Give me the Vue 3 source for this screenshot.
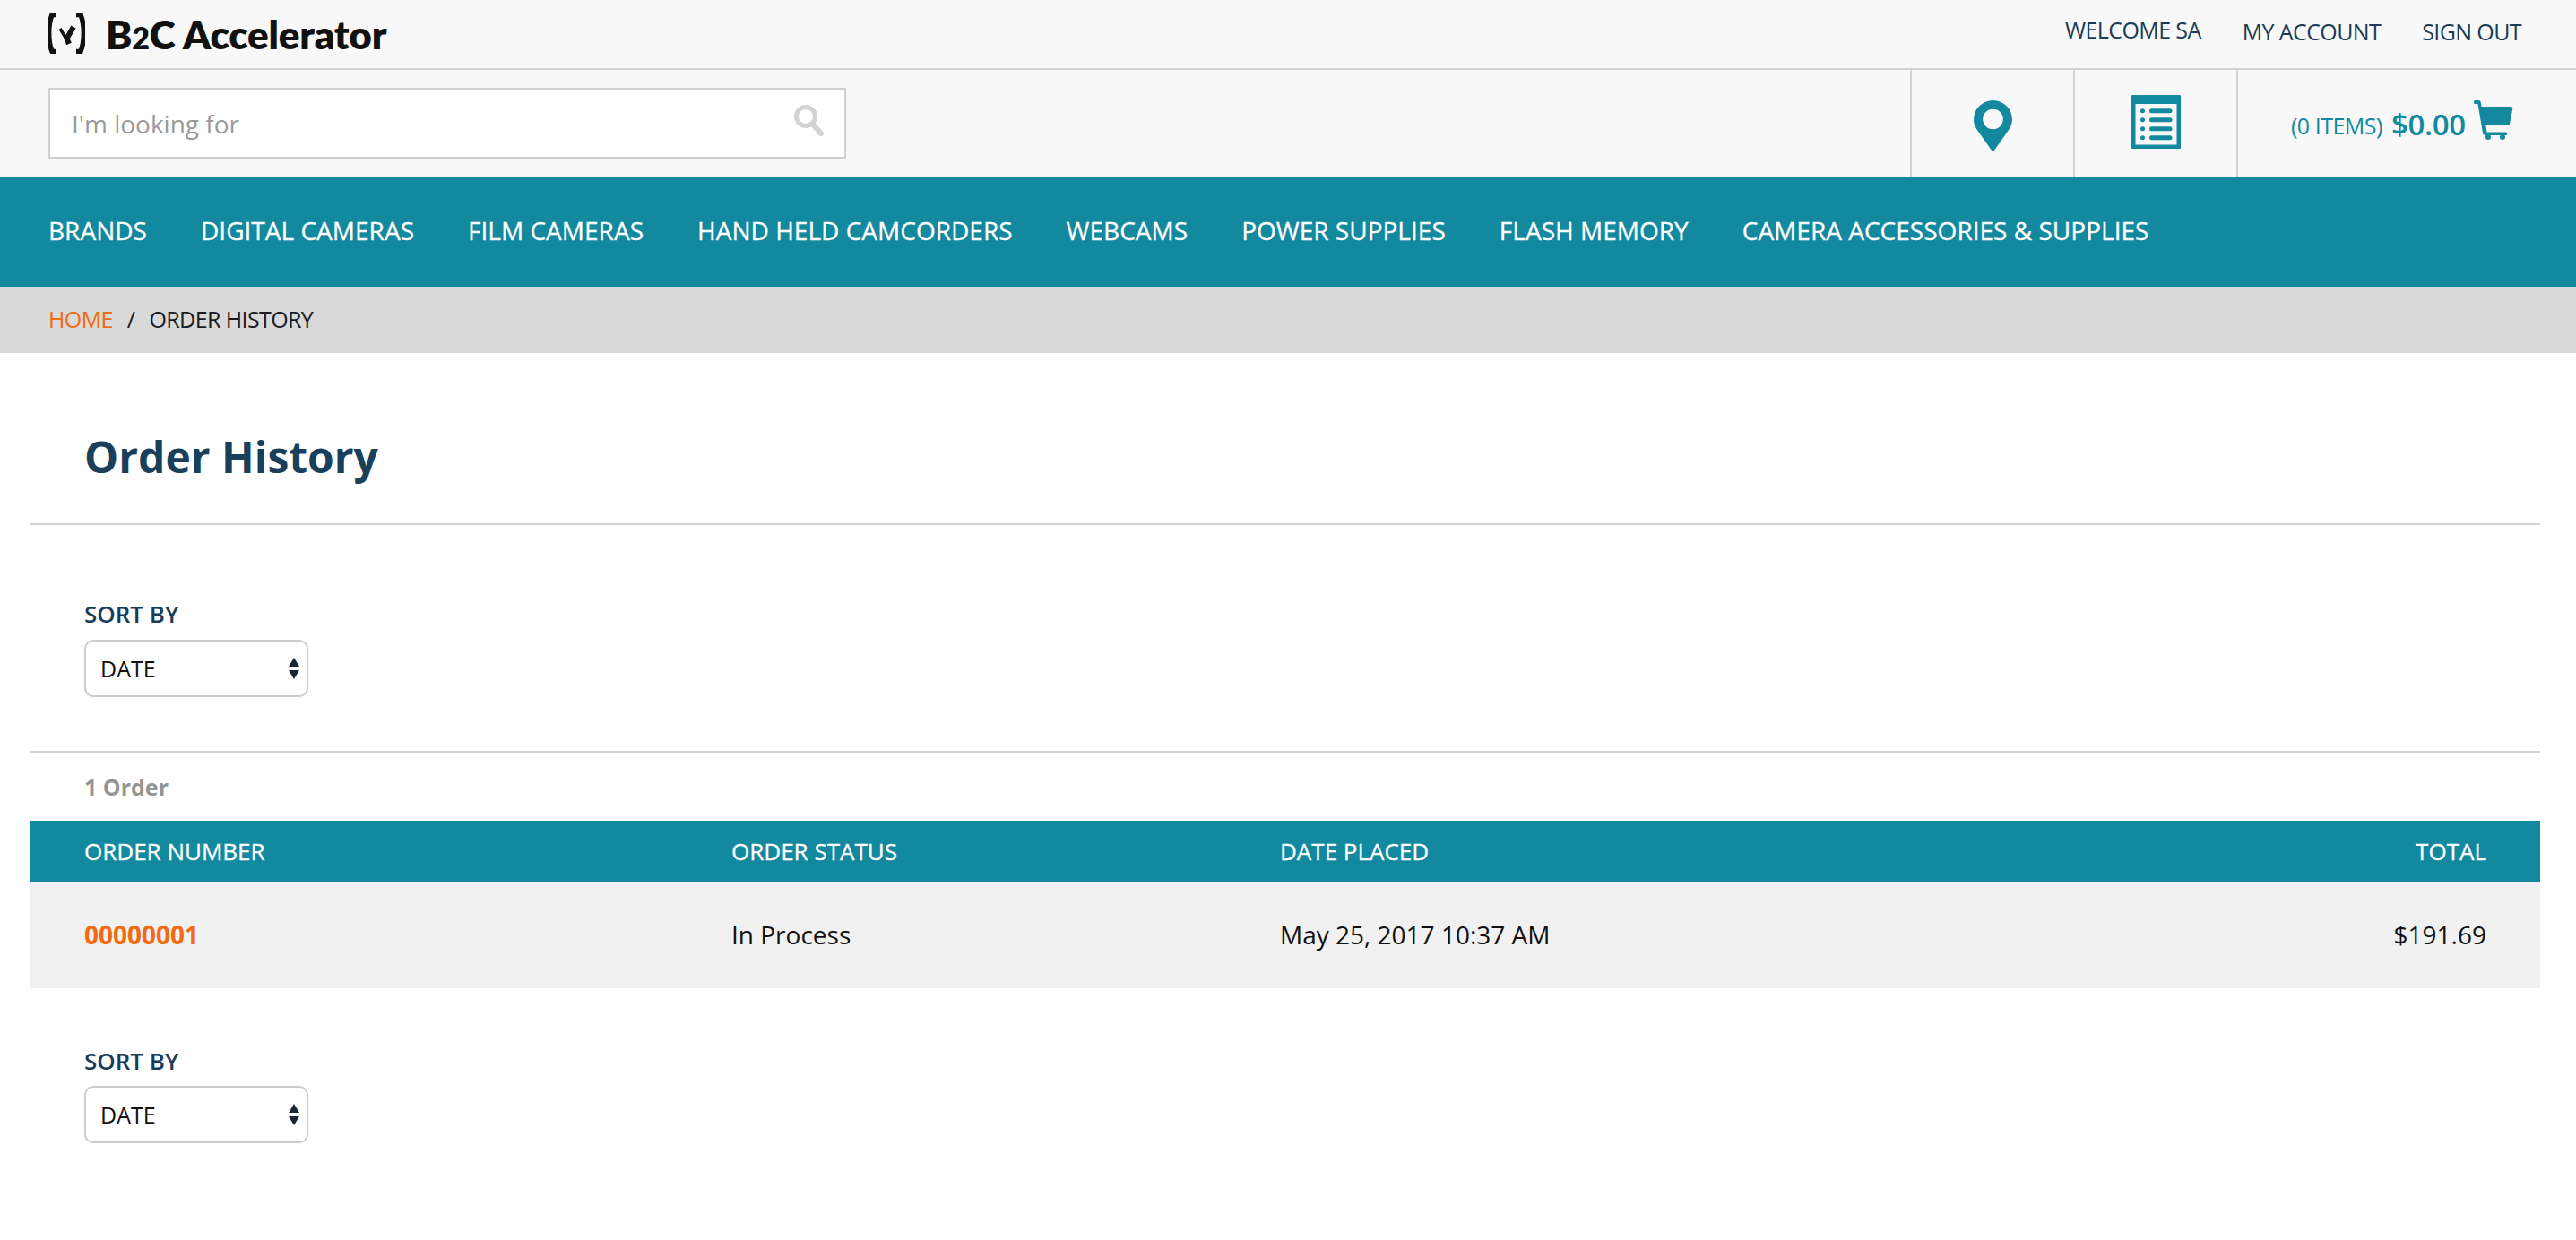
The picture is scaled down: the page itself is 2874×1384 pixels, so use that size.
<script setup>
const nav = ['BRANDS','DIGITAL CAMERAS','FILM CAMERAS','HAND HELD CAMCORDERS','WEBCAMS','POWER SUPPLIES','FLASH MEMORY','CAMERA ACCESSORIES & SUPPLIES']
</script>

<template>
  <div class="page">
    <header class="top">
      <div class="brand">
        <svg class="logo" width="42" height="46" viewBox="0 0 42 46">
          <path d="M10 2.500H5C0.500 14 0.500 32 5 43.500H10M32 2.500h5C41.500 14 41.500 32 37 43.500H32" fill="none" stroke="#111" stroke-width="5.500"/>
          <path d="M14 18l8 13" fill="none" stroke="#111" stroke-width="3.500"/>
          <path d="M29 16l-7.500 13 2.500 6" fill="none" stroke="#111" stroke-width="6"/>
        </svg>
        <span class="brand-name">B<span class="two">2</span>C Accelerator</span>
      </div>
      <nav class="account">
        <a class="welcome">WELCOME SA</a>
        <a>MY ACCOUNT</a>
        <a>SIGN OUT</a>
      </nav>
    </header>

    <div class="tools">
      <div class="search">
        <span class="placeholder">I'm looking for</span>
        <svg width="36" height="36" viewBox="0 0 36 36"><circle cx="15" cy="14" r="10.500" fill="none" stroke="#d2d3d5" stroke-width="5"/><path d="M22 22l10 11" stroke="#d2d3d5" stroke-width="6" stroke-linecap="round"/></svg>
      </div>
      <div class="icons">
        <div class="cell">
          <svg class="pin" width="43" height="58" viewBox="0 0 43 58"><path fill-rule="evenodd" fill="#12899e" d="M21.500 0A21.500 21.500 0 0 1 43 21.500C43 27 40.500 31 37 36L21.500 58 6 36C2.500 31 0 27 0 21.500A21.500 21.500 0 0 1 21.500 0zm0 9.700a11.300 11.300 0 1 0 0 22.600 11.300 11.300 0 0 0 0-22.600z"/></svg>
        </div>
        <div class="cell">
          <svg class="list" width="55" height="60" viewBox="0 0 55 60"><path fill-rule="evenodd" fill="#12899e" d="M1 0h53a1 1 0 0 1 1 1v58a1 1 0 0 1-1 1H1a1 1 0 0 1-1-1V1a1 1 0 0 1 1-1zm3.500 10v45.500h46V10z"/><g fill="#12899e"><circle cx="12.500" cy="17.700" r="2.500"/><rect x="20" y="15.200" width="25.500" height="5" rx="2.500"/><circle cx="12.500" cy="27.700" r="2.500"/><rect x="20" y="25.200" width="25.500" height="5" rx="2.500"/><circle cx="12.500" cy="37.700" r="2.500"/><rect x="20" y="35.200" width="25.500" height="5" rx="2.500"/><circle cx="12.500" cy="47.700" r="2.500"/><rect x="20" y="45.200" width="25.500" height="5" rx="2.500"/></g></svg>
        </div>
        <div class="cart">
          <span class="items">(0 ITEMS)</span>
          <span class="amount">$0.00</span>
          <svg class="cart-icon" width="44" height="44" viewBox="0 0 44 44"><path fill="#12899e" d="M1 0h4.500C7 0 7.500 1 7.800 2.500L8.500 7H41c2 0 2.500 1 2.200 3L40 26c-.3 1.500-1 2-2 2H13.500l1 7.500H36c1.500 0 1.500 3.500 0 3.500H12.500c-1.500 0-2.200-1-2.500-2.500L4.500 4H1C-.3 4-.3 0 1 0z"/><circle fill="#12899e" cx="16" cy="41" r="3"/><circle fill="#12899e" cx="32" cy="41" r="3"/></svg>
        </div>
      </div>
    </div>

    <nav class="main-nav">
      <a v-for="n in nav" :key="n">{{ n }}</a>
    </nav>

    <div class="crumbs">
      <a>HOME</a><span class="sep">/</span><span>ORDER HISTORY</span>
    </div>

    <main class="content">
      <h1>Order History</h1>
      <div class="sort first">
        <label>SORT BY</label>
        <div class="select-wrap">
          <select><option>DATE</option></select>
          <svg width="12" height="24" viewBox="0 0 12 24"><path fill="#1b2530" d="M6 0l6 10H0zM0 14h12L6 24z"/></svg>
        </div>
      </div>
      <div class="count">1 Order</div>
      <div class="table">
        <div class="row head">
          <span>ORDER NUMBER</span><span>ORDER STATUS</span><span>DATE PLACED</span><span>TOTAL</span>
        </div>
        <div class="row body">
          <a>00000001</a><span>In Process</span><span>May 25, 2017 10:37 AM</span><span>$191.69</span>
        </div>
      </div>
      <div class="sort last">
        <label>SORT BY</label>
        <div class="select-wrap">
          <select><option>DATE</option></select>
          <svg width="12" height="24" viewBox="0 0 12 24"><path fill="#1b2530" d="M6 0l6 10H0zM0 14h12L6 24z"/></svg>
        </div>
      </div>
    </main>
  </div>
</template>

<style>
html, body { margin: 0; background: #fff; }
</style>

<style scoped>
.page { width: 2874px; height: 1384px; overflow: hidden; font-family: "Open Sans", "Noto Sans", sans-serif; font-size: 26px; color: #111; }
.top { height: 76px; background: #f8f8f8; border-bottom: 2px solid #d2d2d2; display: flex; justify-content: space-between; align-items: center; padding: 0 61px 0 53px; }
.brand { display: flex; align-items: center; gap: 23px; }
.logo { display: block; margin-top: -2px; }
.brand-name { font-family: Lato, "Open Sans", sans-serif; font-size: 44px; font-weight: 800; letter-spacing: -0.2px; color: #111; line-height: 1; }
.two { font-size: 34px; }
.account { display: flex; gap: 46px; font-size: 25px; letter-spacing: -0.6px; color: #1a3c57; margin-top: -7px; }
.welcome { position: relative; top: -2px; }
.tools { height: 120px; background: #f8f8f8; display: flex; justify-content: space-between; padding-left: 54px; }
.search { width: 890px; height: 79px; box-sizing: border-box; margin-top: 20px; background: #fff; border: 2px solid #cfcfcf; display: flex; align-items: center; justify-content: space-between; padding: 0 22px 0 24px; }
.search svg { margin-top: -8px; }
.placeholder { font-size: 28px; color: #9a9a9a; }
.icons { display: flex; height: 120px; }
.cell { width: 180px; border-left: 2px solid #d2d2d2; display: flex; align-items: center; justify-content: center; }
.pin { margin-top: 5px; }
.list { margin-top: -4px; }
.cart { width: 379px; box-sizing: border-box; border-left: 2px solid #d2d2d2; display: flex; align-items: center; padding-left: 59px; color: #12899e; }
.items { font-size: 25px; letter-spacing: -0.5px; margin-top: 4px; }
.amount { font-size: 33px; font-weight: 600; margin-left: 10px; letter-spacing: -0.3px; }
.cart-icon { margin: -8px 0 0 9px; }
.main-nav { height: 122px; box-sizing: border-box; padding-bottom: 5px; background: #12899e; display: flex; align-items: center; gap: 60px; padding-left: 54px; }
.main-nav a { color: #fff; font-size: 28px; font-weight: 500; letter-spacing: 0.02px; white-space: nowrap; -webkit-text-stroke: 0.3px #fff; }
.crumbs { height: 74px; box-sizing: border-box; padding-bottom: 2px; background: #d9d9d9; display: flex; align-items: center; padding-left: 54px; font-size: 25px; letter-spacing: -0.6px; color: #1a1a22; }
.crumbs a { color: #f26a12; }
.sep { margin: 0 16px; }
.content { padding: 0 40px 0 34px; }
h1 { margin: 0; height: 192px; box-sizing: border-box; border-bottom: 2px solid #d2d2d2; padding: 88px 0 0 60px; font-size: 48px; line-height: 56px; font-weight: 700; color: #1a3f5a; }
.sort { padding-left: 60px; }
.sort.first { height: 254px; box-sizing: border-box; padding-top: 82px; border-bottom: 2px solid #d2d2d2; }
.sort.last { padding-top: 64px; }
.sort label { display: block; font-size: 26px; line-height: 34px; font-weight: 600; color: #1a3c57; margin-bottom: 12px; }
.sort.last label { margin-bottom: 11px; }
.select-wrap { position: relative; width: 250px; height: 64px; }
.select-wrap select { appearance: none; width: 100%; height: 100%; box-sizing: border-box; border: 2px solid #cccccc; border-radius: 10px; background: #fff; font: 400 25px "Open Sans", sans-serif; color: #111; padding: 0 16px; outline: none; }
.select-wrap svg { position: absolute; right: 10px; top: 20px; }
.count { height: 76px; padding-left: 60px; font-size: 25px; font-weight: 700; line-height: 76px; color: #949494; }
.row { display: grid; grid-template-columns: 722px 612px 1fr auto; padding: 0 60px; align-items: center; }
.head { height: 68px; background: #12899e; color: #fff; font-size: 26px; font-weight: 500; -webkit-text-stroke: 0.3px #fff; }
.body { height: 119px; box-sizing: border-box; padding-bottom: 2px; background: #f1f1f1; font-size: 28px; }
.body a { color: #f26a12; font-weight: 700; }
</style>
